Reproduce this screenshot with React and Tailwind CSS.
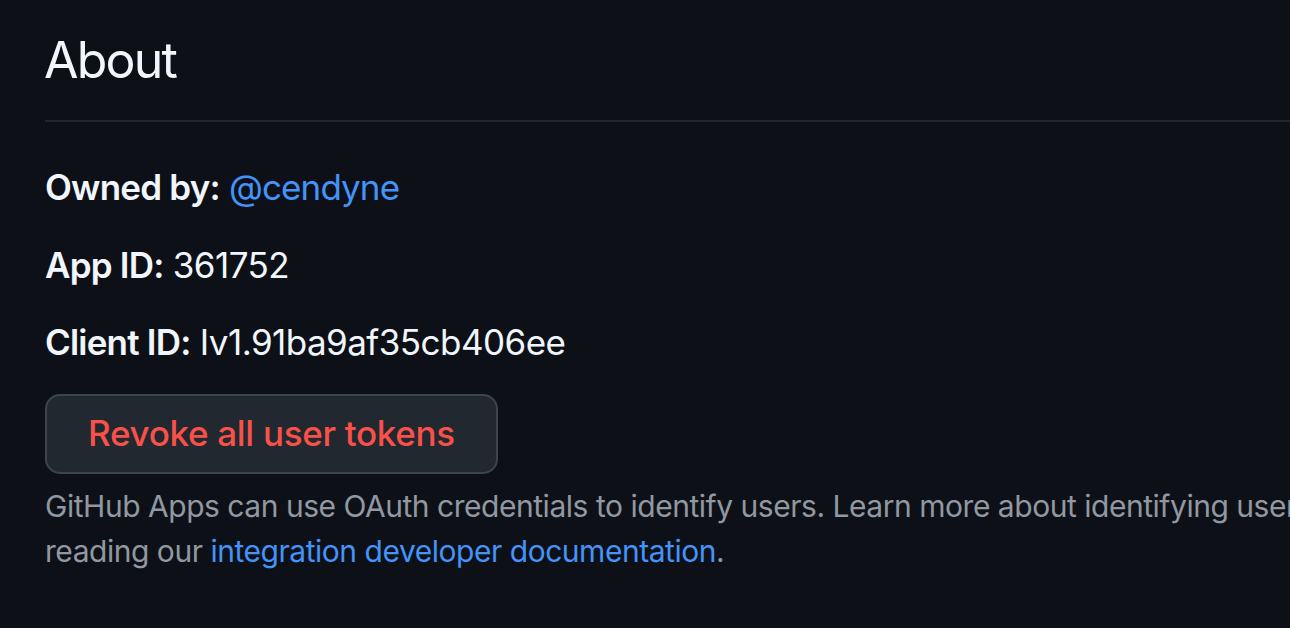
export default function App() {
  return (
    <div className="w-[1290px] h-[628px] overflow-hidden bg-[#0d1117] font-['Inter',sans-serif] text-[#f0f6fc]">
      <div className="w-[1500px] pl-[45px] pt-[23px]">
        <div className="border-b-2 border-[#21262d] pb-[22px]">
          <h2 className="text-[50px] leading-[75px] font-normal tracking-[-1.8px] -ml-[1px]">About</h2>
        </div>
        <div className="pt-[39px] text-[35px] leading-[52.5px] tracking-[-0.55px]">
          <p className="mb-[25px]">
            <span className="font-semibold tracking-[-0.8px]">Owned by:</span>{" "}
            <a className="text-[#4493f8] tracking-[-0.9px]">@cendyne</a>
          </p>
          <p className="mb-[25px]">
            <span className="font-semibold tracking-[-0.8px]">App ID:</span> 361752
          </p>
          <p className="mb-[25px]">
            <span className="font-semibold tracking-[-0.8px]">Client ID:</span> Iv1.91ba9af35cb406ee
          </p>
          <button className="h-[80px] px-[41px] rounded-[15px] border-2 border-[#3d444d] bg-[#212830] text-[#f85149] text-[35px] font-medium leading-none tracking-[-0.3px]">
            Revoke all user tokens
          </button>
          <p className="mt-[10px] text-[30px] leading-[45px] text-[#9198a1] whitespace-nowrap tracking-[-0.47px]">
            GitHub Apps can use OAuth credentials to identify users. Learn more about identifying users by
            <br />
            reading our <a className="text-[#4493f8]">integration developer documentation</a>.
          </p>
        </div>
      </div>
    </div>
  );
}
